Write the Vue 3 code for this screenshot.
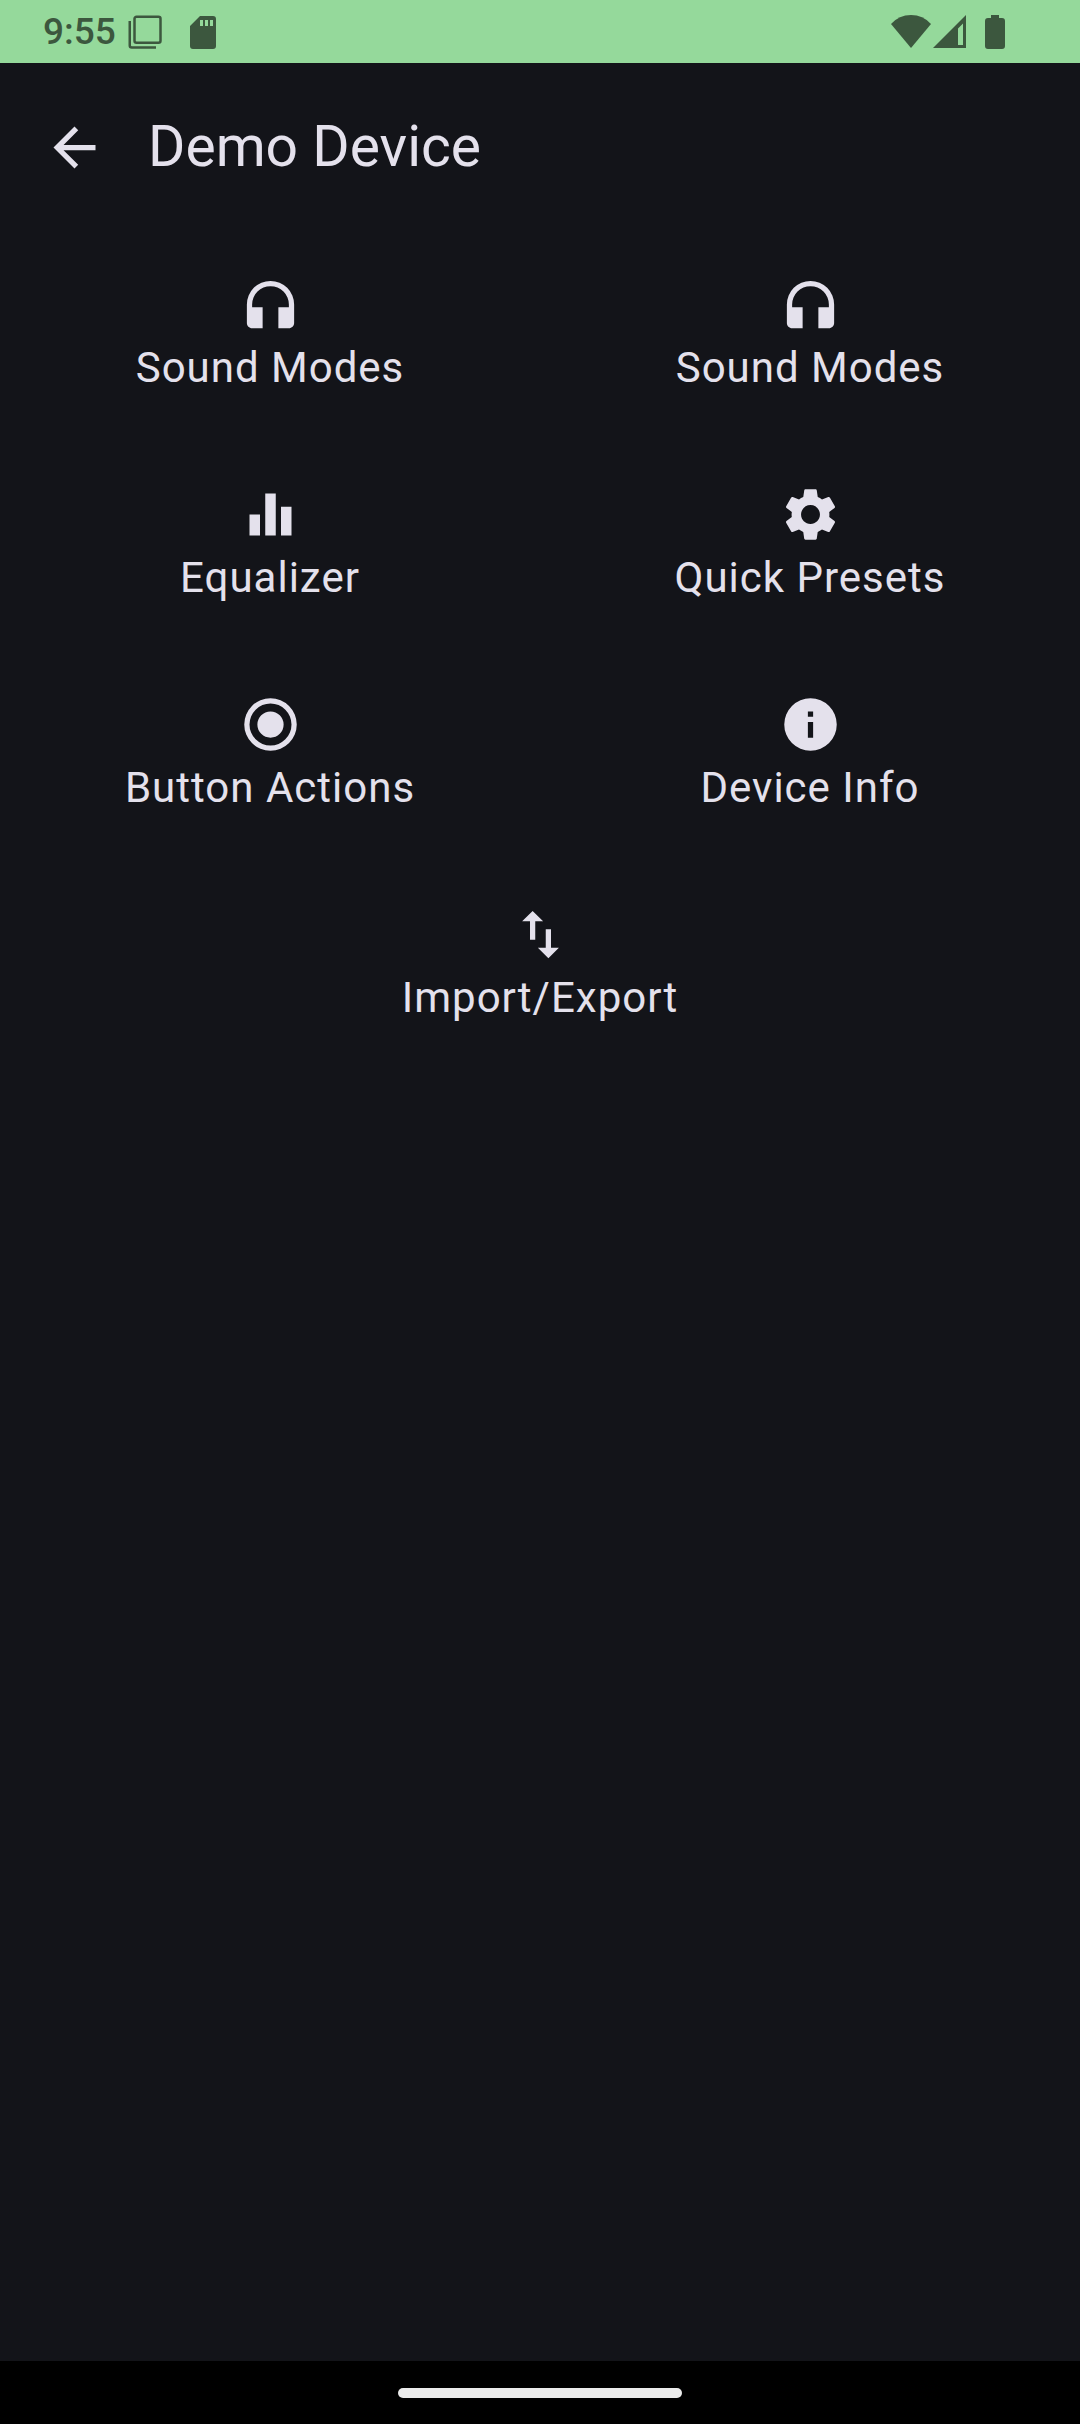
<script setup>
const headphones = 'M12 3a9 9 0 0 0-9 9v7c0 1.1.9 2 2 2h4v-8H5v-1a7 7 0 0 1 14 0v1h-4v8h4c1.1 0 2-.9 2-2v-7a9 9 0 0 0-9-9z'

const items = [
  { label: 'Sound Modes', icon: headphones },
  { label: 'Sound Modes', icon: headphones },
  { label: 'Equalizer', icon: 'M10 20h4V4h-4v16zm-6 0h4v-8H4v8zM16 9v11h4V9h-4z' },
  { label: 'Quick Presets', icon: 'M19.14 12.94c.04-.3.06-.61.06-.94 0-.32-.02-.64-.07-.94l2.03-1.58c.18-.14.23-.41.12-.61l-1.92-3.32c-.12-.22-.37-.29-.59-.22l-2.39.96c-.5-.38-1.03-.7-1.62-.94l-.36-2.54c-.04-.24-.24-.41-.48-.41h-3.84c-.24 0-.43.17-.47.41l-.36 2.54c-.59.24-1.13.57-1.62.94l-2.39-.96c-.22-.08-.47 0-.59.22L2.74 8.87c-.12.21-.08.47.12.61l2.03 1.58c-.05.3-.09.63-.09.94s.02.64.07.94l-2.03 1.58c-.18.14-.23.41-.12.61l1.92 3.32c.12.22.37.29.59.22l2.39-.96c.5.38 1.03.7 1.62.94l.36 2.54c.05.24.24.41.48.41h3.84c.24 0 .44-.17.47-.41l.36-2.54c.59-.24 1.13-.56 1.62-.94l2.39.96c.22.08.47 0 .59-.22l1.92-3.32c.12-.22.07-.47-.12-.61l-2.01-1.58zM12 15.6c-1.98 0-3.6-1.62-3.6-3.6s1.62-3.6 3.6-3.6 3.6 1.62 3.6 3.6-1.62 3.6-3.6 3.6z' },
  { label: 'Button Actions', icon: 'M12 7a5 5 0 1 0 0 10 5 5 0 0 0 0-10zm0-5a10 10 0 1 0 0 20 10 10 0 0 0 0-20zm0 18a8 8 0 1 1 0-16 8 8 0 0 1 0 16z' },
  { label: 'Device Info', icon: 'M12 2a10 10 0 1 0 0 20 10 10 0 0 0 0-20zm1 15h-2v-6h2v6zm0-8h-2V7h2v2z' },
  { label: 'Import/Export', icon: 'M9 3L5 6.99h3V14h2V6.99h3L9 3zm7 14.01V10h-2v7.01h-3L15 21l4-3.99h-3z' },
]
</script>

<template>
  <div class="screen">
    <div class="status">
      <span class="clock">9:55</span>
      <svg class="stack" width="34" height="34" viewBox="0 0 34 34" fill="none" stroke="currentColor" stroke-width="2.5">
        <rect x="6.500" y="1.750" width="26" height="26" rx="2" />
        <path d="M1.750 6v24.500q0 2 2 2H28" />
      </svg>
      <svg class="sd" width="26" height="34" viewBox="0 0 26 34" fill="currentColor" fill-rule="evenodd">
        <path d="M10 1h13q3 0 3 3v27q0 3-3 3H3q-3 0-3-3V11zM10 5v6h3V5zM15 5v6h3V5zM20 5v6h3V5z" />
      </svg>
      <span class="spacer"></span>
      <svg width="40" height="34" viewBox="0 0 40 34" fill="currentColor">
        <path d="M0 9Q8 0 20 0t20 9L20 33z" />
      </svg>
      <svg class="signal" width="34" height="34" viewBox="0 0 34 34" fill="currentColor" fill-rule="evenodd">
        <path d="M33 0v33H0zM30 8.500L25 13.500V30h5z" />
      </svg>
      <svg class="battery" width="20" height="34" viewBox="0 0 20 34" fill="currentColor">
        <path d="M6 0h8v3h3q3 0 3 3v25q0 3-3 3H3q-3 0-3-3V6q0-3 3-3h3z" />
      </svg>
    </div>

    <header class="bar">
      <button class="back" type="button" aria-label="Back">
        <svg class="icon" viewBox="0 0 24 24"><path d="M20 11H7.830l5.590-5.590L12 4l-8 8 8 8 1.410-1.410L7.830 13H20v-2z" /></svg>
      </button>
      <h1>Demo Device</h1>
    </header>

    <main class="grid">
      <button v-for="(item, i) in items" :key="i" class="tile" type="button">
        <svg class="icon" viewBox="0 0 24 24" aria-hidden="true"><path :d="item.icon" /></svg>
        <span>{{ item.label }}</span>
      </button>
    </main>

    <div class="nav"><div class="pill"></div></div>
  </div>
</template>

<style>
body {
  background: #131419;
}
</style>

<style scoped>
.screen {
  min-height: 100vh;
  display: flex;
  flex-direction: column;
  background: #131419;
  color: #e4e1ec;
  font-family: Roboto, "Noto Sans", sans-serif;
}
.status {
  height: 63px;
  box-sizing: border-box;
  padding: 0 75px 0 43px;
  display: flex;
  align-items: center;
  background: #95d99b;
  color: #3c573e;
}
.clock {
  font-size: 37px;
  font-weight: 500;
  line-height: 44px;
}
.stack {
  margin-left: 12px;
}
.sd {
  margin-left: 28px;
}
.spacer {
  flex: 1;
}
.signal {
  margin-left: 2px;
}
.battery {
  margin-left: 18px;
}
.bar {
  height: 168px;
  padding: 0 11px;
  display: flex;
  align-items: center;
  gap: 11px;
}
button {
  border: 0;
  margin: 0;
  background: none;
  color: inherit;
  font: inherit;
  cursor: pointer;
}
.back {
  width: 126px;
  height: 126px;
  padding: 0;
  display: flex;
  align-items: center;
  justify-content: center;
}
.icon {
  width: 63px;
  height: 63px;
  display: block;
  fill: currentColor;
}
h1 {
  margin: 0;
  font-size: 57px;
  line-height: 74px;
  font-weight: 400;
}
.grid {
  flex: 1;
  display: flex;
  flex-wrap: wrap;
  align-content: flex-start;
}
.tile {
  flex: 1 0 50%;
  padding: 42px 0;
  display: flex;
  flex-direction: column;
  align-items: center;
  font-size: 42px;
  line-height: 63px;
  letter-spacing: 1px;
}
.nav {
  height: 63px;
  display: flex;
  align-items: center;
  justify-content: center;
  background: #000;
}
.pill {
  width: 284px;
  height: 10px;
  border-radius: 5px;
  background: #ebebeb;
}
</style>
